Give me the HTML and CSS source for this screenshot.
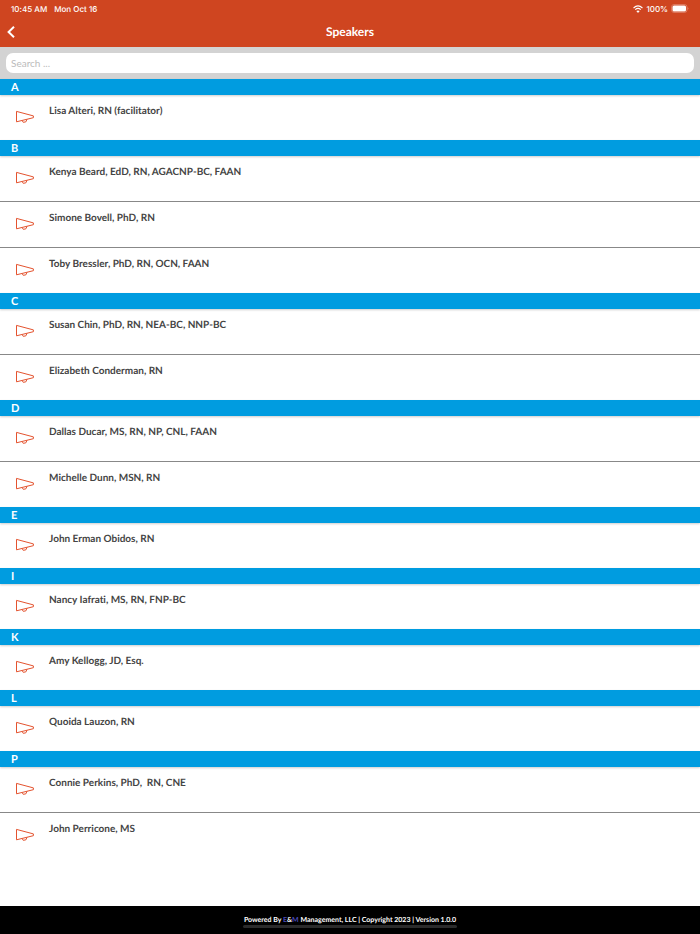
FILE: index.html
```
<!DOCTYPE html>
<html lang="en">
<head>
    <meta charset="UTF-8">
    <meta name="viewport" content="width=device-width, initial-scale=1.0">
    <title>Speakers</title>
    <link rel="stylesheet" href="styles.css">
</head>
<body>
    <svg class="sprite" aria-hidden="true">
        <symbol id="megaphone" viewBox="0 0 20 14">
            <path d="M1.5 1.4 L18.4 5.9 V7.7 L1.5 11.8 Z M7.2 10.6 L8.2 12.3 L10.8 11.9 L12 9.4"/>
        </symbol>
    </svg>

    <header class="topbar">
        <div class="status">
            <span class="time">10:45 AM</span>
            <span class="date">Mon Oct 16</span>
            <span class="device">
                <svg class="wifi" viewBox="0 0 18 14" aria-hidden="true">
                    <path d="M1 5.2 Q9 -2.4 17 5.2 M4 8.2 Q9 3.6 14 8.2"/>
                    <path class="dot" d="M9 14 L6 10.8 Q9 8.2 12 10.8 Z"/>
                </svg>
                <span>100%</span>
                <svg class="battery" viewBox="0 0 36 18" aria-hidden="true">
                    <rect class="shell" x="1" y="1" width="31" height="16" rx="5"/>
                    <rect class="charge" x="3" y="3" width="27" height="12" rx="3"/>
                    <path class="tip" d="M33.5 6 Q36 9 33.5 12 Z"/>
                </svg>
            </span>
        </div>
        <nav class="nav">
            <button class="back" type="button" aria-label="Back">
                <svg viewBox="0 0 8 12" aria-hidden="true"><path d="M7 0.8 L1.6 6 L7 11.2"/></svg>
            </button>
            <h1 class="title">Speakers</h1>
        </nav>
    </header>

    <form class="search">
        <input class="search-input" type="search" placeholder="Search ..." aria-label="Search speakers">
    </form>

    <main class="speakers">
        <section>
            <h2 class="letter">A</h2>
            <a class="speaker" href="#"><svg class="icon"><use href="#megaphone"/></svg><span>Lisa Alteri, RN (facilitator)</span></a>
        </section>
        <section>
            <h2 class="letter">B</h2>
            <a class="speaker" href="#"><svg class="icon"><use href="#megaphone"/></svg><span>Kenya Beard, EdD, RN, AGACNP-BC, FAAN</span></a>
            <a class="speaker" href="#"><svg class="icon"><use href="#megaphone"/></svg><span>Simone Bovell, PhD, RN</span></a>
            <a class="speaker" href="#"><svg class="icon"><use href="#megaphone"/></svg><span>Toby Bressler, PhD, RN, OCN, FAAN</span></a>
        </section>
        <section>
            <h2 class="letter">C</h2>
            <a class="speaker" href="#"><svg class="icon"><use href="#megaphone"/></svg><span>Susan Chin, PhD, RN, NEA-BC, NNP-BC</span></a>
            <a class="speaker" href="#"><svg class="icon"><use href="#megaphone"/></svg><span>Elizabeth Conderman, RN</span></a>
        </section>
        <section>
            <h2 class="letter">D</h2>
            <a class="speaker" href="#"><svg class="icon"><use href="#megaphone"/></svg><span>Dallas Ducar, MS, RN, NP, CNL, FAAN</span></a>
            <a class="speaker" href="#"><svg class="icon"><use href="#megaphone"/></svg><span>Michelle Dunn, MSN, RN</span></a>
        </section>
        <section>
            <h2 class="letter">E</h2>
            <a class="speaker" href="#"><svg class="icon"><use href="#megaphone"/></svg><span>John Erman Obidos, RN</span></a>
        </section>
        <section>
            <h2 class="letter">I</h2>
            <a class="speaker" href="#"><svg class="icon"><use href="#megaphone"/></svg><span>Nancy Iafrati, MS, RN, FNP-BC</span></a>
        </section>
        <section>
            <h2 class="letter">K</h2>
            <a class="speaker" href="#"><svg class="icon"><use href="#megaphone"/></svg><span>Amy Kellogg, JD, Esq.</span></a>
        </section>
        <section>
            <h2 class="letter">L</h2>
            <a class="speaker" href="#"><svg class="icon"><use href="#megaphone"/></svg><span>Quoida Lauzon, RN</span></a>
        </section>
        <section>
            <h2 class="letter">P</h2>
            <a class="speaker" href="#"><svg class="icon"><use href="#megaphone"/></svg><span>Connie Perkins, PhD,&nbsp; RN, CNE</span></a>
            <a class="speaker" href="#"><svg class="icon"><use href="#megaphone"/></svg><span>John Perricone, MS</span></a>
        </section>
    </main>

    <footer class="footer">
        <p>Powered By <a class="brand" href="#"><span>E</span>&amp;<span>M</span></a> Management, LLC | Copyright 2023 | Version 1.0.0</p>
        <div class="home-bar"></div>
    </footer>
</body>
</html>
```
FILE: styles.css
```
*{
    padding: 0;
    margin: 0;
    box-sizing: border-box;
}
body{
    display: flex;
    flex-direction: column;
    min-height: 100vh;
    background-color: #fff;
    color: #444;
    font-family: "Lato", sans-serif;
    font-size: 10px;
    font-variant-ligatures: none;
    text-rendering: geometricPrecision;
}
a{
    color: inherit;
    text-decoration: none;
}
svg{
    display: block;
    fill: none;
}
.sprite{
    display: none;
}

/* top bar */
.topbar{
    background-color: #cf4520;
    color: #fff;
}
.status{
    display: flex;
    align-items: center;
    gap: 7px;
    height: 17px;
    padding: 0 11px;
    font-family: "Inter", sans-serif;
    font-size: 8px;
    font-weight: 500;
}
.device{
    display: flex;
    align-items: center;
    gap: 3px;
    margin-left: auto;
}
.wifi{
    width: 10px;
    height: 8px;
    stroke: #fff;
    stroke-width: 2;
}
.wifi .dot{
    fill: #fff;
    stroke: none;
}
.battery{
    width: 18px;
    height: 9px;
}
.battery .shell{
    stroke: #e8a592;
    stroke-width: 1;
}
.battery .charge{
    fill: #fff;
}
.battery .tip{
    fill: #e8a592;
}
.nav{
    display: grid;
    grid-template-columns: 30px 1fr 30px;
    align-items: center;
    height: 30px;
}
.back{
    padding: 7px;
    background: none;
    border: none;
    cursor: pointer;
}
.back svg{
    width: 8px;
    height: 12px;
    stroke: #fff;
    stroke-width: 2;
}
.title{
    text-align: center;
    font-size: 12px;
    font-weight: 700;
    line-height: 14px;
}

/* search */
.search{
    padding: 6px;
    background-color: #d3d3d3;
}
.search-input{
    display: block;
    width: 100%;
    height: 20px;
    padding: 0 5px;
    border: none;
    border-radius: 7px;
    background-color: #fff;
    font-family: inherit;
    font-size: 10px;
}
.search-input::placeholder{
    color: #bbb;
}

/* list */
.speakers{
    flex: 1;
}
.letter{
    height: 16px;
    padding: 0 11px;
    background-color: #009ce0;
    box-shadow: 0 1px 2px rgba(0, 0, 0, 0.2);
    color: #fff;
    font-size: 11px;
    font-weight: 700;
    line-height: 17px;
}
.speaker{
    display: flex;
    gap: 14px;
    padding: 8px 15px 20px;
    font-weight: 700;
    line-height: 17px;
}
.speaker + .speaker{
    border-top: 1px solid #888;
}
.icon{
    width: 20px;
    height: 14px;
    margin-top: 7px;
    margin-bottom: -4px;
    stroke: #e4532f;
    stroke-width: 1;
    stroke-linejoin: round;
}

/* footer */
.footer{
    display: flex;
    flex-direction: column;
    align-items: center;
    height: 28px;
    padding-top: 9px;
    background-color: #000;
    color: #fff;
    font-size: 7px;
    font-weight: 700;
    line-height: 10px;
}
.brand span{
    color: #4a4ab8;
}
.home-bar{
    width: 214px;
    height: 3px;
    border-radius: 2px;
    background-color: #2b2b2b;
}
```
